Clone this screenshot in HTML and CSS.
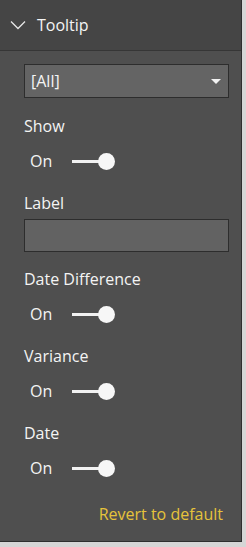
FILE: index.html
```html
<html>
<head>
    <title>Tooltip</title>
    <link rel="stylesheet" href="styles.css">
</head>
<body>
    <div class="panel">
        <div class="panel-header">
            <svg class="chevron" width="16" height="10" viewBox="0 0 16 10">
                <path d="M1 1.5 L8 8.5 L15 1.5" fill="none" stroke="#e6e6e6" stroke-width="1.3"/>
            </svg>
            <span class="panel-title">Tooltip</span>
        </div>
        <div class="panel-body">
            <div class="dropdown">
                <span>[All]</span>
                <span class="caret"></span>
            </div>

            <div class="field first">
                <div class="field-label">Show</div>
                <div class="toggle"><span class="toggle-text">On</span><span class="switch"></span></div>
            </div>

            <div class="field">
                <div class="field-label">Label</div>
                <div class="text-box"></div>
            </div>

            <div class="field after-box">
                <div class="field-label">Date Difference</div>
                <div class="toggle"><span class="toggle-text">On</span><span class="switch"></span></div>
            </div>

            <div class="field">
                <div class="field-label">Variance</div>
                <div class="toggle"><span class="toggle-text">On</span><span class="switch"></span></div>
            </div>

            <div class="field">
                <div class="field-label">Date</div>
                <div class="toggle"><span class="toggle-text">On</span><span class="switch"></span></div>
            </div>

            <div class="revert">Revert to default</div>
        </div>
    </div>
</body>
</html>
```

FILE: styles.css
```css
body {
    margin: 0;
    padding: 0;
    background-color: #d6d6d6;
    font-family: "Open Sans", "Noto Sans", sans-serif;
    color: #f4f4f4;
}

.panel {
    width: 241px;
    height: 541px;
    background-color: #4f4f4f;
    border-right: 1px solid #2e2e2e;
    border-bottom: 1px solid #2e2e2e;
}

.panel-header {
    height: 50px;
    background-color: #454545;
    border-bottom: 1px solid #363636;
    display: flex;
    align-items: center;
}

.chevron {
    margin-left: 10px;
    margin-right: 11px;
}

.panel-title {
    font-size: 16px;
    line-height: 20px;
}

.panel-body {
    padding: 13px 12px 0 24px;
    font-size: 16px;
    line-height: 20px;
}

.dropdown {
    height: 32px;
    background-color: #646464;
    border: 1px solid #2d2d2d;
    display: flex;
    align-items: center;
    justify-content: space-between;
    padding: 0 7px 0 6px;
}

.caret {
    width: 0;
    height: 0;
    border-left: 5px solid transparent;
    border-right: 5px solid transparent;
    border-top: 5px solid #f2f2f2;
}

.field {
    margin-top: 22px;
}

.field.first {
    margin-top: 18px;
}

.field.after-box {
    margin-top: 17px;
}

.field-label {
    height: 20px;
}

.toggle {
    margin-top: 15px;
    height: 20px;
    display: flex;
    align-items: center;
    padding-left: 6px;
}

.toggle-text {
    width: 42px;
}

.switch {
    position: relative;
    width: 43px;
    height: 17px;
}

.switch::before {
    content: "";
    position: absolute;
    left: 0;
    top: 7px;
    width: 30px;
    height: 3px;
    background-color: #f2f2f2;
}

.switch::after {
    content: "";
    position: absolute;
    right: 0;
    top: 0;
    width: 17px;
    height: 17px;
    border-radius: 50%;
    background-color: #f7f7f7;
}

.text-box {
    margin-top: 6px;
    height: 31px;
    background-color: #626262;
    border: 1px solid #2d2d2d;
}

.revert {
    margin-top: 26px;
    margin-right: 6px;
    text-align: right;
    color: #e6c33b;
}
```
